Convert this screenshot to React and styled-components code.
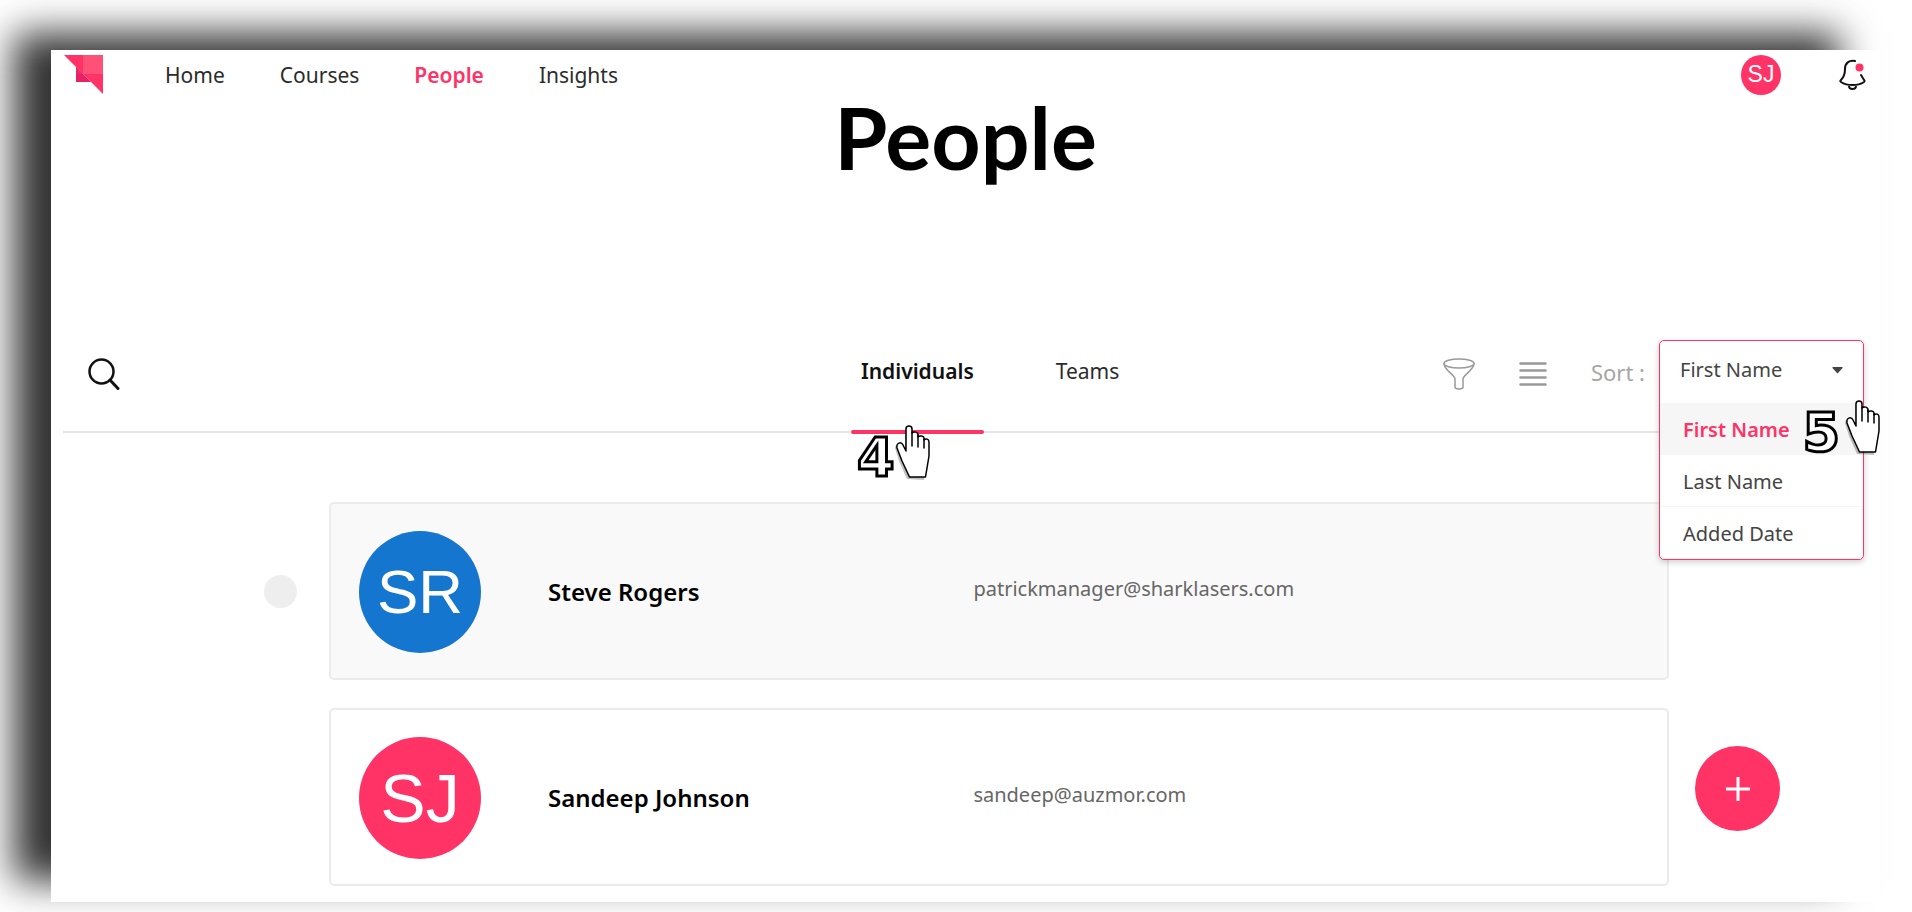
import React, { useState } from "react";
import styled, { createGlobalStyle, css } from "styled-components";

const pink = "#ff3366";
const arial = `"Liberation Sans", Arial, sans-serif`;

const GlobalStyle = createGlobalStyle`
  * {
    box-sizing: border-box;
  }
  body {
    margin: 0;
    background: #fff;
    overflow-x: hidden;
    font-family: "Noto Sans", "Open Sans", sans-serif;
    color: #2b2b2b;
  }
  button, select, input {
    font: inherit;
    color: inherit;
    margin: 0;
    padding: 0;
    border: 0;
    background: none;
    cursor: pointer;
  }
`;

const Backdrop = styled.div`
  padding: 50px 32px 12px 51px;
  overflow: hidden;
`;

const Page = styled.main`
  position: relative;
  background: #fff;
  box-shadow: -39px -19px 36px -2px rgba(0, 0, 0, 0.8);
`;

const Header = styled.header`
  display: flex;
  align-items: center;
  height: 49px;
  padding: 0 14px 0 13px;
`;

const Nav = styled.nav`
  display: flex;
  flex: 1;
  gap: 55px;
  margin-left: 62px;
`;

const NavLink = styled.a`
  font-size: 21px;
  line-height: 28px;
  text-decoration: none;
  color: ${(props) => (props.$active ? pink : "#2b2b2b")};
  font-weight: ${(props) => (props.$active ? 600 : 400)};
`;

const HeaderActions = styled.div`
  display: flex;
  align-items: center;
  gap: 58px;
`;

const IconButton = styled.button`
  display: flex;
`;

const Avatar = styled.span`
  display: flex;
  align-items: center;
  justify-content: center;
  width: ${(props) => props.$size}px;
  height: ${(props) => props.$size}px;
  border-radius: 50%;
  background: ${(props) => props.$color};
  color: #fff;
  font-family: ${arial};
  font-size: ${(props) => props.$text}px;
  line-height: 1;
`;

const Title = styled.h1`
  margin: 0;
  text-align: center;
  font-family: Lato, sans-serif;
  font-size: 86px;
  line-height: 76px;
  font-weight: 700;
  color: #000;
`;

const Toolbar = styled.div`
  display: grid;
  grid-template-columns: 7fr 9fr;
  margin: 165px 16px 0 12px;
  border-bottom: 2px solid #e4e4e4;
`;

const SearchCell = styled.div`
  display: flex;
  align-items: center;
  height: 68px;
  padding-left: 25px;
`;

const ToolbarMain = styled.div`
  display: flex;
  justify-content: space-between;
`;

const Tabs = styled.div`
  display: flex;
  gap: 62px;
  margin-bottom: -3px;
`;

const TabSlot = styled.div`
  position: relative;
`;

const Tab = styled.button`
  display: block;
  padding: 0 10px 32px;
  font-size: 21px;
  line-height: 62px;

  ${(props) =>
    props.$active &&
    css`
      font-weight: 600;
      color: #111;

      &::after {
        content: "";
        position: absolute;
        right: 0;
        bottom: 0;
        left: 0;
        height: 4px;
        border-radius: 2px;
        background: ${pink};
      }
    `}
`;

const Tools = styled.div`
  display: flex;
  align-items: center;
  gap: 44px;
  height: 68px;
`;

const SortGroup = styled.div`
  display: flex;
  align-items: center;
  gap: 14px;
`;

const SortLabel = styled.label`
  font-size: 22px;
  line-height: 28px;
  padding-bottom: 4px;
  color: #a6a6a6;
  white-space: nowrap;
`;

const SortBox = styled.div`
  position: relative;
  align-self: flex-start;
  width: 205px;
  height: 68px;
`;

const SortPanel = styled.div`
  position: absolute;
  top: 0;
  left: 0;
  right: 0;
  z-index: 2;
  border: 1px solid ${pink};
  border-radius: 5px;
  background: #fff;
  box-shadow: 0 2px 6px rgba(0, 0, 0, 0.2);
`;

const SelectWrap = styled.div`
  display: flex;
  align-items: center;
  height: 62px;
  padding: 0 20px 4px;
`;

const Select = styled.select`
  flex: 1;
  appearance: none;
  outline: none;
  font-size: 20px;
  line-height: 28px;
  color: #444;
`;

const Options = styled.ul`
  margin: 0;
  padding: 0;
  list-style: none;
`;

const Option = styled.li`
  padding: 2px 23px 0;
  font-size: 20px;
  line-height: 49px;
  color: ${(props) => (props.$active ? pink : "#444")};
  font-weight: ${(props) => (props.$active ? 600 : 400)};
  background: ${(props) => (props.$active ? "#f6f6f6" : "#fff")};
  border-bottom: 1px solid #f6f6f6;

  &:last-child {
    border-radius: 0 0 5px 5px;
  }
`;

const Step = styled.div`
  position: absolute;
  z-index: 3;
  display: flex;
  align-items: flex-end;
  pointer-events: none;
  ${(props) =>
    props.$menu
      ? css`
          top: 58px;
          right: -18px;
          gap: 5px;
        `
      : css`
          top: 84px;
          left: 6px;
        `}
`;

const StepNumber = styled.span`
  font-family: "DejaVu Sans", sans-serif;
  font-weight: 700;
  font-size: 54px;
  line-height: 44px;
  color: #fff;
  -webkit-text-stroke: 3px #000;
`;

const List = styled.ul`
  display: flex;
  flex-direction: column;
  gap: 28px;
  margin: 0;
  padding: 69px 211px 16px 213px;
  list-style: none;
`;

const Row = styled.li`
  display: grid;
  grid-template-columns: 33px 1fr;
  gap: 32px;
  align-items: center;
`;

const RowCheck = styled.input`
  appearance: none;
  width: 33px;
  height: 33px;
  border-radius: 50%;
  background: #eee;
`;

const Card = styled.article`
  grid-column: 2;
  display: grid;
  grid-template-columns: 122px 7fr 13fr;
  gap: 67px;
  align-items: center;
  padding: 27px 28px 25px;
  border: 2px solid #ebebeb;
  border-radius: 5px;
  background: ${(props) => (props.$selected ? "#f9f9f9" : "#fff")};
`;

const Name = styled.h2`
  margin: 0;
  font-size: 24px;
  line-height: 32px;
  font-weight: 600;
  color: #000;
`;

const Email = styled.p`
  margin: 0 0 6px;
  font-size: 20px;
  line-height: 28px;
  color: #666;
`;

const AddButton = styled.button`
  position: absolute;
  right: 100px;
  bottom: 71px;
  display: flex;
  align-items: center;
  justify-content: center;
  width: 85px;
  height: 85px;
  border-radius: 50%;
  background: ${pink};
`;

const Logo = () => (
  <svg width="39" height="39" viewBox="0 0 39 39" aria-hidden="true">
    <path d="M0 0H39V39Z" fill="#ff3366" />
    <path d="M19 0H39V19H19Z" fill="#ff5078" />
    <path d="M12 12L27 27H12Z" fill="#e62265" />
    <path d="M12 12L19 19H12Z" fill="#ee2a66" />
  </svg>
);

const Bell = () => (
  <svg width="27" height="32" viewBox="0 0 27 32" fill="none">
    <path
      d="M16 2C10 1 6 4 6 10C6 15 5 18 2 21C1 22 1 22 2 23C8 27 19 27 25 23C26 22 26 22 25 21L22 16"
      stroke="#111"
      strokeWidth="2"
      strokeLinecap="round"
    />
    <path d="M10 27C10 31 17 31 17 27" stroke="#111" strokeWidth="2" />
    <circle cx="20.5" cy="8.5" r="4" fill="#ff3366" />
  </svg>
);

const Search = () => (
  <svg width="32" height="32" viewBox="0 0 32 32" fill="none" stroke="#111">
    <circle cx="13.5" cy="13.5" r="12" strokeWidth="2.5" />
    <path d="M22 22L30 30.5" strokeWidth="3" strokeLinecap="round" />
  </svg>
);

const Filter = () => (
  <svg width="32" height="32" viewBox="0 0 32 32" fill="none" stroke="#999" strokeWidth="1.5">
    <ellipse cx="16" cy="5.5" rx="15" ry="4.5" />
    <path d="M1 5.5C1 12 12 17 12 21V29C12 31.5 20 31.5 20 29V21C20 17 31 12 31 5.5" />
  </svg>
);

const Lines = () => (
  <svg width="28" height="26" viewBox="0 0 28 26" stroke="#999" strokeWidth="2.5" strokeLinecap="round">
    <path d="M1.5 2.5H26.5M1.5 9.5H26.5M1.5 16.5H26.5M1.5 23.5H26.5" />
  </svg>
);

const Caret = () => (
  <svg width="11" height="7" viewBox="0 0 11 7" aria-hidden="true">
    <path d="M1 0H10Q11 0 10.5 1L6 6Q5.5 6.5 5 6L0.5 1Q0 0 1 0Z" fill="#444" />
  </svg>
);

const Plus = () => (
  <svg width="24" height="24" viewBox="0 0 24 24" stroke="#fff" strokeWidth="3">
    <path d="M12 0V24M0 12H24" />
  </svg>
);

const Hand = () => (
  <svg width="36" height="56" viewBox="-1 -1 36 56" aria-hidden="true">
    <path
      d="M12 53L4 35L0 22C0 18 5 18 7 21L10 26V4C10 0 16 0 16 4V8C18 6 22 7 22 10V12C24 10 28 11 28 13V15C30 13 33 14 33 17V31L29 54Z"
      fill="#000"
      opacity="0.25"
      transform="translate(-1 1)"
    />
    <path
      d="M13.5 52L6 36L1 23C0 18 5 16 7 20L10 26V4C10 0 16 0 16 4V8C18 6 22 7 22 10V12C24 10 28 11 28 13V15C30 13 33 14 33 17V31L29.5 52Z"
      fill="#fff"
      stroke="#000"
      strokeWidth="1.5"
      strokeLinejoin="round"
    />
    <path d="M16 7V21M22 10V22M28 14V23" stroke="#000" strokeWidth="1.5" strokeLinecap="round" />
  </svg>
);

const links = ["Home", "Courses", "People", "Insights"];
const sortOptions = ["First Name", "Last Name", "Added Date"];
const people = [
  {
    initials: "SR",
    name: "Steve Rogers",
    email: "patrickmanager@sharklasers.com",
    color: "#1476cf",
    textSize: 62,
    hovered: true,
  },
  {
    initials: "SJ",
    name: "Sandeep Johnson",
    email: "sandeep@auzmor.com",
    color: pink,
    textSize: 68,
  },
];

export default function App() {
  const [tab, setTab] = useState("Individuals");
  const [sort, setSort] = useState("First Name");

  return (
    <Backdrop>
      <GlobalStyle />
      <Page>
        <Header>
          <Logo />
          <Nav>
            {links.map((link) => (
              <NavLink key={link} href={`#${link.toLowerCase()}`} $active={link === "People"}>
                {link}
              </NavLink>
            ))}
          </Nav>
          <HeaderActions>
            <IconButton aria-label="Account">
              <Avatar $size={40} $text={23} $color={pink}>SJ</Avatar>
            </IconButton>
            <IconButton aria-label="Notifications">
              <Bell />
            </IconButton>
          </HeaderActions>
        </Header>

        <Title>People</Title>

        <Toolbar>
          <SearchCell>
            <IconButton aria-label="Search">
              <Search />
            </IconButton>
          </SearchCell>
          <ToolbarMain>
            <Tabs>
              {["Individuals", "Teams"].map((name) => (
                <TabSlot key={name}>
                  <Tab $active={tab === name} onClick={() => setTab(name)}>
                    {name}
                  </Tab>
                  {name === "Individuals" && (
                    <Step>
                      <StepNumber>4</StepNumber>
                      <Hand />
                    </Step>
                  )}
                </TabSlot>
              ))}
            </Tabs>
            <Tools>
              <IconButton aria-label="Filter">
                <Filter />
              </IconButton>
              <IconButton aria-label="List view">
                <Lines />
              </IconButton>
              <SortGroup>
                <SortLabel htmlFor="sort">Sort :</SortLabel>
                <SortBox>
                  <SortPanel>
                    <SelectWrap>
                      <Select id="sort" value={sort} onChange={(e) => setSort(e.target.value)}>
                        {sortOptions.map((option) => (
                          <option key={option}>{option}</option>
                        ))}
                      </Select>
                      <Caret />
                    </SelectWrap>
                    <Options role="listbox" aria-label="Sort by">
                      {sortOptions.map((option) => (
                        <Option
                          key={option}
                          role="option"
                          aria-selected={option === sort}
                          $active={option === sort}
                          onClick={() => setSort(option)}
                        >
                          {option}
                        </Option>
                      ))}
                    </Options>
                    <Step $menu>
                      <StepNumber>5</StepNumber>
                      <Hand />
                    </Step>
                  </SortPanel>
                </SortBox>
              </SortGroup>
            </Tools>
          </ToolbarMain>
        </Toolbar>

        <List>
          {people.map((person) => (
            <Row key={person.email}>
              {person.hovered && <RowCheck type="checkbox" aria-label={`Select ${person.name}`} />}
              <Card $selected={person.hovered}>
                <Avatar $size={122} $text={person.textSize} $color={person.color}>
                  {person.initials}
                </Avatar>
                <Name>{person.name}</Name>
                <Email>{person.email}</Email>
              </Card>
            </Row>
          ))}
        </List>

        <AddButton aria-label="Add person">
          <Plus />
        </AddButton>
      </Page>
    </Backdrop>
  );
}
